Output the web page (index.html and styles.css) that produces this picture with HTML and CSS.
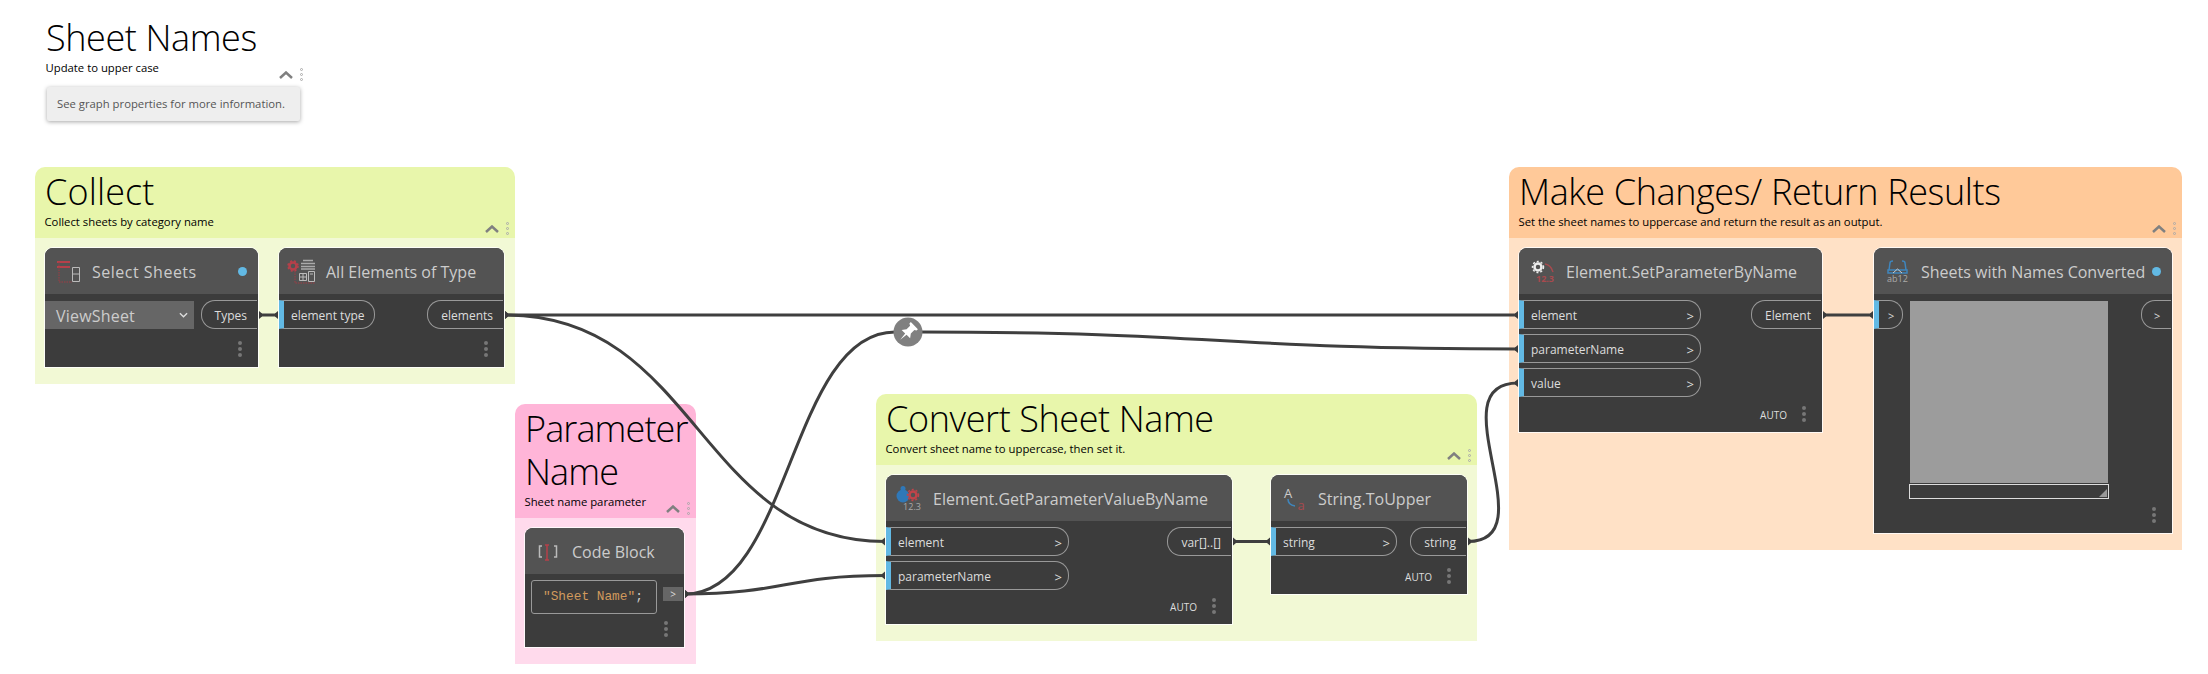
FILE: index.html
```html
<!DOCTYPE html>
<html lang="en">
<head>
  <meta charset="UTF-8">
  <title>Sheet Names</title>
  <link rel="stylesheet" href="styles.css">
</head>
<body>
  <div id="canvas">
    <!-- groups sit at the back, wires over them, nodes on top -->
    <section class="group group-title">
      <div class="group-head">
        <h2>Sheet Names</h2>
        <p>Update to upper case</p>
        <div class="group-tools">
          <svg class="chevron" viewBox="0 0 14 8"><polyline points="1,7 7,1.5 13,7"/></svg>
          <span class="grip"><i></i><i></i><i></i></span>
        </div>
      </div>
    </section>
    <div class="note">See graph properties for more information.</div>

    <section class="group group-collect green">
      <div class="group-head">
        <h2>Collect</h2>
        <p>Collect sheets by category name</p>
        <div class="group-tools">
          <svg class="chevron" viewBox="0 0 14 8"><polyline points="1,7 7,1.5 13,7"/></svg>
          <span class="grip"><i></i><i></i><i></i></span>
        </div>
      </div>
      <div class="group-body"></div>
    </section>

    <section class="group group-param pink">
      <div class="group-head">
        <h2>Parameter Name</h2>
        <p>Sheet name parameter</p>
        <div class="group-tools">
          <svg class="chevron" viewBox="0 0 14 8"><polyline points="1,7 7,1.5 13,7"/></svg>
          <span class="grip"><i></i><i></i><i></i></span>
        </div>
      </div>
      <div class="group-body"></div>
    </section>

    <section class="group group-convert green">
      <div class="group-head">
        <h2>Convert Sheet Name</h2>
        <p>Convert sheet name to uppercase, then set it.</p>
        <div class="group-tools">
          <svg class="chevron" viewBox="0 0 14 8"><polyline points="1,7 7,1.5 13,7"/></svg>
          <span class="grip"><i></i><i></i><i></i></span>
        </div>
      </div>
      <div class="group-body"></div>
    </section>

    <section class="group group-make orange">
      <div class="group-head">
        <h2>Make Changes/ Return Results</h2>
        <p>Set the sheet names to uppercase and return the result as an output.</p>
        <div class="group-tools">
          <svg class="chevron" viewBox="0 0 14 8"><polyline points="1,7 7,1.5 13,7"/></svg>
          <span class="grip"><i></i><i></i><i></i></span>
        </div>
      </div>
      <div class="group-body"></div>
    </section>

    <svg id="wires" viewBox="0 0 2208 674">
      <defs>
        <marker id="nub-start" markerUnits="userSpaceOnUse" markerWidth="8" markerHeight="12" refX="4" refY="6" orient="auto">
          <polygon points="4,2 7,4.500 7,7.500 4,10" fill="#3c3c3c"/>
        </marker>
        <marker id="nub-end" markerUnits="userSpaceOnUse" markerWidth="8" markerHeight="12" refX="4" refY="6" orient="auto">
          <polygon points="1,4.500 4,2 4,10 1,7.500" fill="#3c3c3c"/>
        </marker>
      </defs>
      <path class="wire" d="M259 315H278"/>
      <path class="wire" d="M505 315H1518"/>
      <path class="wire" d="M505 315C698 315 698 541.500 885 541.500"/>
      <path class="wire plain-end" d="M685 594C790 594 790 332 895 332"/>
      <path class="wire plain-start" d="M921 332C1220 332 1220 349 1518 349"/>
      <path class="wire" d="M685 594C785 594 785 575.500 885 575.500"/>
      <path class="wire" d="M1233 541.500H1270"/>
      <path class="wire" d="M1468 541.500C1548 541.500 1436 383 1518 383"/>
      <path class="wire" d="M1823 315H1873"/>
      <g transform="translate(908 332)">
        <circle r="14.500" fill="#808080"/>
        <path transform="rotate(45)" d="M-5-9H5V-7L3-6V-1L6 3H1L0 11-1 3H-6L-3-1V-6L-5-7Z" fill="#fff"/>
      </g>
    </svg>

    <div class="node node-select">
      <div class="node-head">
        <svg class="node-icon" viewBox="0 0 30 30">
          <path d="M4 6H17M4 11H17" stroke="#b5404a" stroke-width="2"/>
          <path d="M6 6V26H19" fill="none" stroke="#a03c44" stroke-dasharray="1.500 1"/>
          <path d="M19.500 11.500H26.500V25.500H19.500ZM19.500 18H26.500" fill="none" stroke="#bbb"/>
        </svg>
        <span class="node-title">Select Sheets</span>
        <span class="node-dot"></span>
      </div>
      <div class="node-body">
        <div class="dropdown">ViewSheet
          <svg viewBox="0 0 10 6"><polyline points="1,1 5,5 9,1"/></svg>
        </div>
        <div class="ports-out"><div class="port-out">Types</div></div>
      </div>
      <div class="node-foot"><span class="kebab"><i></i><i></i><i></i></span></div>
    </div>

    <div class="node node-all">
      <div class="node-head">
        <svg class="node-icon" viewBox="0 0 30 30">
          <circle cx="6" cy="10" r="3.500" fill="none" stroke="#b5404a" stroke-width="2.500"/>
          <circle cx="6" cy="10" r="5" fill="none" stroke="#b5404a" stroke-width="1.500" stroke-dasharray="2 2"/>
          <path d="M8 15V27H28" fill="none" stroke="#a03c44" stroke-dasharray="1.500 1"/>
          <path d="M16 4.500H26M14 7.500H28M14 10.500H28M14 13H28" stroke="#aaa" stroke-width="1.500"/>
          <path d="M12.500 17.500H19.500V24.500H12.500ZM16 17.500V24.500M12.500 21H19.500M21.500 15.500H27.500V25.500H21.500ZM23 18H26" fill="none" stroke="#bbb"/>
        </svg>
        <span class="node-title">All Elements of Type</span>
      </div>
      <div class="node-body">
        <div class="ports-in"><div class="port-in">element type</div></div>
        <div class="ports-out"><div class="port-out">elements</div></div>
      </div>
      <div class="node-foot"><span class="kebab"><i></i><i></i><i></i></span></div>
    </div>

    <div class="node node-code">
      <div class="node-head">
        <svg class="node-icon" viewBox="0 0 30 30">
          <path d="M9 10H6.500V21H9M21 10H23.500V21H21" fill="none" stroke="#bbb" stroke-width="1.500"/>
          <path d="M12 9H16M14 9V24M12 24H16" fill="none" stroke="#b5404a" stroke-width="1.500"/>
        </svg>
        <span class="node-title">Code Block</span>
      </div>
      <div class="node-body code-body">
        <div class="code-input"><span class="code-string">"Sheet Name"</span>;</div>
        <div class="code-out">&gt;</div>
      </div>
      <div class="node-foot"><span class="kebab"><i></i><i></i><i></i></span></div>
    </div>

    <div class="node node-get">
      <div class="node-head">
        <svg class="node-icon" viewBox="0 0 30 30">
          <circle cx="9" cy="13" r="6.500" fill="#2f78b8"/>
          <circle cx="9" cy="5.500" r="2.500" fill="#2f78b8"/>
          <circle cx="19" cy="12" r="3.500" fill="none" stroke="#c0444a" stroke-width="2.500"/>
          <circle cx="19" cy="12" r="5.500" fill="none" stroke="#c0444a" stroke-width="1.500" stroke-dasharray="2 2"/>
          <text class="icon-text" x="18" y="27" fill="#aaa">12.3</text>
        </svg>
        <span class="node-title">Element.GetParameterValueByName</span>
      </div>
      <div class="node-body">
        <div class="ports-in">
          <div class="port-in">element<b>&gt;</b></div>
          <div class="port-in">parameterName<b>&gt;</b></div>
        </div>
        <div class="ports-out"><div class="port-out">var[]..[]</div></div>
      </div>
      <div class="node-foot"><span class="lacing">AUTO</span><span class="kebab"><i></i><i></i><i></i></span></div>
    </div>

    <div class="node node-upper">
      <div class="node-head">
        <svg class="node-icon" viewBox="0 0 30 30">
          <text class="icon-letter" x="9" y="15" fill="#ccc">A</text>
          <path d="M9 16Q9 22 16 23" fill="none" stroke="#3f86bd" stroke-width="1.500"/>
          <text class="icon-letter" x="22" y="27" fill="#a84a4e">a</text>
        </svg>
        <span class="node-title">String.ToUpper</span>
      </div>
      <div class="node-body">
        <div class="ports-in"><div class="port-in">string<b>&gt;</b></div></div>
        <div class="ports-out"><div class="port-out">string</div></div>
      </div>
      <div class="node-foot"><span class="lacing">AUTO</span><span class="kebab"><i></i><i></i><i></i></span></div>
    </div>

    <div class="node node-set">
      <div class="node-head">
        <svg class="node-icon" viewBox="0 0 30 30">
          <circle cx="11" cy="11" r="3.500" fill="none" stroke="#eee" stroke-width="2.500"/>
          <circle cx="11" cy="11" r="5.500" fill="none" stroke="#eee" stroke-width="1.500" stroke-dasharray="2 2"/>
          <path d="M18 8Q24 9 26 16" fill="none" stroke="#a84a4e" stroke-width="1.500"/>
          <text class="icon-text strong" x="18" y="26" fill="#a84a4e">12.3</text>
        </svg>
        <span class="node-title">Element.SetParameterByName</span>
      </div>
      <div class="node-body">
        <div class="ports-in">
          <div class="port-in">element<b>&gt;</b></div>
          <div class="port-in">parameterName<b>&gt;</b></div>
          <div class="port-in">value<b>&gt;</b></div>
        </div>
        <div class="ports-out"><div class="port-out">Element</div></div>
      </div>
      <div class="node-foot"><span class="lacing">AUTO</span><span class="kebab"><i></i><i></i><i></i></span></div>
    </div>

    <div class="node node-watch">
      <div class="node-head">
        <svg class="node-icon" viewBox="0 0 30 30">
          <path d="M7 14L8 7Q8 5 11 5M24 14L23 7Q23 5 20 5" fill="none" stroke="#3f86bd" stroke-width="1.500"/>
          <rect x="6" y="14" width="19" height="3" fill="none" stroke="#3f86bd" stroke-width="1.500"/>
          <path d="M11 17L15.500 13 20 17" fill="none" stroke="#ccc"/>
          <text class="icon-text" x="15.500" y="26" fill="#aaa">ab12</text>
        </svg>
        <span class="node-title">Sheets with Names Converted</span>
        <span class="node-dot"></span>
      </div>
      <div class="node-body">
        <div class="ports-in"><div class="port-in small">&gt;</div></div>
        <div class="watch">
          <div class="watch-view"></div>
          <div class="watch-bar"></div>
        </div>
        <div class="ports-out"><div class="port-out small">&gt;</div></div>
      </div>
      <div class="node-foot"><span class="kebab"><i></i><i></i><i></i></span></div>
    </div>
  </div>
</body>
</html>
```

FILE: styles.css
```css
html, body {
  margin: 0;
  padding: 0;
  background: #fff;
  overflow: hidden;
}
#canvas {
  position: relative;
  width: 2208px;
  height: 674px;
  font-family: "Open Sans", "Noto Sans", sans-serif;
}
#wires {
  position: absolute;
  left: 0;
  top: 0;
  width: 2208px;
  height: 674px;
}
.wire {
  fill: none;
  stroke: #3f3f3f;
  stroke-width: 3;
  marker-start: url(#nub-start);
  marker-end: url(#nub-end);
}
.wire.plain-end {
  marker-end: none;
}
.wire.plain-start {
  marker-start: none;
}

/* groups */
.group {
  position: absolute;
  display: flex;
  flex-direction: column;
  border-radius: 10px 10px 0 0;
  overflow: hidden;
}
.group-head {
  position: relative;
  padding: 3px 10px 9px;
  color: #000;
}
.group-head h2 {
  margin: 0;
  font-size: 36px;
  font-weight: 300;
  line-height: 43px;
  letter-spacing: -0.4px;
}
.group-head p {
  margin: 1px 0 0 -0.5px;
  font-size: 11.3px;
  line-height: 15px;
  white-space: nowrap;
}
.group-body {
  flex: 1;
}
.group-tools {
  position: absolute;
  right: 6px;
  bottom: 3px;
  display: flex;
  align-items: center;
  gap: 7px;
}
.chevron {
  width: 14px;
  height: 8px;
}
.chevron polyline {
  fill: none;
  stroke: #808080;
  stroke-width: 2.5;
}
.grip {
  display: flex;
  flex-direction: column;
  gap: 2px;
}
.grip i {
  width: 1px;
  height: 1px;
  border: 1px solid #aaa;
  border-radius: 50%;
}
.group-title { left: 36px; top: 13px; width: 273px; height: 71px; }
.group-collect { left: 35px; top: 167px; width: 480px; height: 217px; }
.group-param { left: 515px; top: 404px; width: 181px; height: 260px; }
.group-convert { left: 876px; top: 394px; width: 601px; height: 247px; }
.group-make { left: 1509px; top: 167px; width: 673px; height: 383px; }
.group-collect h2 { letter-spacing: 0.1px; }
.group-param h2 { letter-spacing: -0.9px; }
.green .group-head { background: #e8f6ab; }
.green .group-body { background: #f2f9d5; }
.pink .group-head { background: #ffb5d8; }
.pink .group-body { background: #ffdaec; }
.orange .group-head { background: #ffc999; }
.orange .group-body { background: #ffe1c6; }

.note {
  position: absolute;
  left: 47px;
  top: 87px;
  width: 243px;
  height: 34px;
  padding-left: 10px;
  line-height: 34px;
  font-size: 11.3px;
  color: #555;
  background: #eee;
  border-radius: 2px;
  box-shadow: 0 1px 4px rgba(0, 0, 0, 0.35);
  white-space: nowrap;
}

/* nodes */
.node {
  position: absolute;
  display: flex;
  flex-direction: column;
  background: #3c3c3c;
  color: #ddd;
  border-radius: 8px 8px 0 0;
  box-shadow: 0 0 0 1px rgba(255, 255, 255, 0.8);
}
.node-select { left: 45px; top: 248px; width: 213px; height: 119px; }
.node-all { left: 279px; top: 248px; width: 225px; height: 119px; }
.node-code { left: 525px; top: 528px; width: 159px; height: 119px; }
.node-get { left: 886px; top: 475px; width: 346px; height: 149px; }
.node-upper { left: 1271px; top: 475px; width: 196px; height: 119px; }
.node-set { left: 1519px; top: 248px; width: 303px; height: 184px; }
.node-watch { left: 1874px; top: 248px; width: 298px; height: 285px; }

.node-head {
  display: flex;
  align-items: center;
  flex: none;
  height: 46px;
  background: #535353;
  border-radius: 8px 8px 0 0;
}
.node-icon {
  flex: none;
  width: 30px;
  height: 30px;
  margin: 0 9px 0 8px;
}
.icon-text {
  font-size: 9px;
  text-anchor: middle;
}
.icon-text.strong {
  font-weight: 700;
}
.icon-letter {
  font-size: 13px;
  text-anchor: middle;
}
.node-title {
  padding-top: 2px;
  font-size: 16px;
  color: #ccc;
  white-space: nowrap;
}
.node-select .node-title {
  letter-spacing: 0.5px;
}
.node-dot {
  width: 9px;
  height: 9px;
  margin-left: auto;
  margin-right: 11px;
  border-radius: 50%;
  background: #62b9e4;
}
.node-body {
  display: flex;
  justify-content: space-between;
  align-items: flex-start;
  padding-top: 6px;
}
.ports-in, .ports-out {
  display: flex;
  flex-direction: column;
  gap: 5px;
}
.ports-out {
  margin-right: 1px;
}
.port-in, .port-out {
  display: flex;
  align-items: center;
  height: 29px;
  box-sizing: border-box;
  padding-top: 2px;
  font-size: 12px;
  white-space: nowrap;
  border: 1px solid #999;
}
.port-in {
  padding-left: 7px;
  padding-right: 6px;
  border-left: 5px solid #62b9e4;
  border-radius: 0 14px 14px 0;
}
.port-in b {
  margin-left: auto;
  font-weight: 400;
  font-size: 13px;
}
.port-out {
  padding-left: 13px;
  padding-right: 10px;
  border-right: 0;
  border-radius: 14px 0 0 14px;
}
.port-in.small {
  width: 29px;
  padding-left: 9px;
  padding-right: 0;
  font-size: 11px;
}
.port-out.small {
  width: 30px;
  padding-left: 12px;
  padding-right: 0;
  font-size: 11px;
}
.node-all .port-in { width: 96px; }
.node-get .port-in { width: 183px; }
.node-set .port-in { width: 182px; }
.node-upper .port-in { width: 126px; }

.dropdown {
  position: relative;
  box-sizing: border-box;
  width: 149px;
  height: 28px;
  margin-top: 1px;
  padding: 1px 0 0 11px;
  line-height: 28px;
  font-size: 16px;
  letter-spacing: 0.2px;
  color: #ccc;
  background: #666;
}
.dropdown svg {
  position: absolute;
  right: 6px;
  top: 11px;
  width: 9px;
  height: 6px;
}
.dropdown polyline {
  fill: none;
  stroke: #ddd;
  stroke-width: 1.5;
}

.code-body {
  justify-content: flex-start;
  gap: 6px;
  padding-left: 6px;
}
.code-input {
  box-sizing: border-box;
  width: 126px;
  height: 34px;
  padding-left: 11px;
  border: 1px solid #999;
  border-radius: 3px;
  font-family: "Liberation Mono", monospace;
  font-size: 12.8px;
  line-height: 32px;
  color: #ccc;
  white-space: nowrap;
}
.code-string {
  color: #d19a5c;
}
.code-out {
  width: 20px;
  height: 14px;
  margin-top: 7px;
  background: #666;
  color: #ddd;
  font-size: 10px;
  line-height: 14px;
  text-align: center;
}

.watch {
  display: flex;
  flex-direction: column;
  width: 200px;
  margin-left: 6px;
  margin-right: auto;
}
.watch-view {
  width: 198px;
  height: 182px;
  margin: 1px 0 1px 1px;
  background: #9c9c9c;
}
.watch-bar {
  position: relative;
  box-sizing: border-box;
  height: 15px;
  border: 1px solid #ddd;
}
.watch-bar::after {
  content: "";
  position: absolute;
  right: 1px;
  bottom: 1px;
  border-style: solid;
  border-width: 0 0 8px 8px;
  border-color: transparent transparent #999 transparent;
}

.node-foot {
  display: flex;
  align-items: center;
  justify-content: flex-end;
  gap: 15px;
  margin-top: auto;
  padding: 0 16px 10px 0;
}
.lacing {
  padding-top: 2px;
  font-size: 10px;
  color: #ddd;
}
.kebab {
  display: flex;
  flex-direction: column;
  gap: 2px;
}
.kebab i {
  width: 4px;
  height: 4px;
  border-radius: 50%;
  background: #777;
}
```
